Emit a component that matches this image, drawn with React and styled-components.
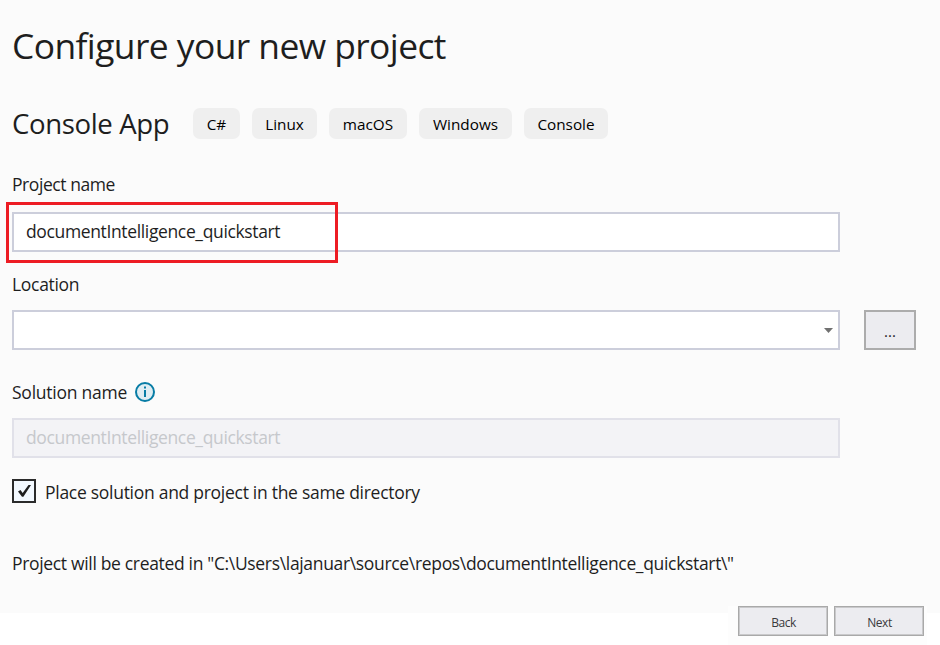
import React from "react";
import styled, { createGlobalStyle } from "styled-components";

const Global = createGlobalStyle`
  *, *::before, *::after { box-sizing: border-box; }
  body {
    margin: 0;
    background: #ffffff;
    color: #1e1e1e;
    font-family: "Open Sans", "Noto Sans", sans-serif;
    font-size: 17.5px;
  }
  button, input { font: inherit; }
`;

const Page = styled.div`
  width: 940px;
  height: 645px;
  overflow: hidden;
`;

const Content = styled.main`
  height: 613px;
  padding: 22px 24px 0 12px;
  background: #fbfbfb;
`;

const Title = styled.h1`
  margin: 0;
  height: 46px;
  font-size: 35.4px;
  font-weight: 400;
  line-height: 46px;
  letter-spacing: -0.58px;
  white-space: nowrap;
`;

const Template = styled.div`
  display: flex;
  align-items: center;
  height: 31px;
  margin-top: 40px;
`;

const TemplateName = styled.h2`
  margin: 0;
  width: 181px;
  font-size: 27.6px;
  font-weight: 400;
  line-height: 31px;
  letter-spacing: -0.38px;
  white-space: nowrap;
`;

const Tags = styled.div`
  display: flex;
  gap: 12px;
`;

const Tag = styled.span`
  width: ${(p) => p.$width}px;
  height: 31px;
  border-radius: 7px;
  background: #efefef;
  color: #000;
  font-size: 15.3px;
  line-height: 32px;
  text-align: center;
`;

const Label = styled.label`
  display: flex;
  align-items: center;
  gap: 8px;
  height: 24px;
  margin-top: ${(p) => p.$top}px;
  line-height: 24px;
  letter-spacing: ${(p) => p.$spacing || 0}px;
  white-space: nowrap;
`;

const FieldRow = styled.div`
  position: relative;
  display: flex;
  gap: 24px;
  height: 40px;
  margin-top: ${(p) => p.$top}px;
`;

const TextInput = styled.input`
  width: 828px;
  height: 40px;
  padding: 0 12px 2px;
  border: 2px solid #cccedb;
  border-radius: 0;
  outline: none;
  background: #fff;
  color: #1e1e1e;
  letter-spacing: -0.36px;
  &:disabled {
    border-color: #e1e1e9;
    background: #f3f3f6;
    color: #c6c8cc;
  }
`;

const Combo = styled.div`
  display: flex;
  align-items: center;
  justify-content: flex-end;
  width: 828px;
  height: 40px;
  padding-right: 5px;
  border: 2px solid #cccedb;
  background: #fff;
`;

const BrowseButton = styled.button`
  width: 52px;
  height: 40px;
  padding: 2px 0 0;
  border: 2px solid #acacac;
  background: #ececf0;
  color: #1e1e1e;
  font-size: 15px;
  line-height: 20px;
`;

const Highlight = styled.div`
  position: absolute;
  left: -6px;
  top: -10px;
  width: 332px;
  height: 61px;
  border: 3px solid #ed1c24;
  pointer-events: none;
`;

const CheckRow = styled.div`
  display: flex;
  gap: 9px;
  height: 24px;
  margin-top: 21px;
  line-height: 27px;
  letter-spacing: -0.28px;
  white-space: nowrap;
`;

const CheckBox = styled.span`
  width: 24px;
  height: 24px;
  border: 2px solid #2b2b2b;
  background: #f3f9ff;
  svg { display: block; }
`;

const PathNote = styled.p`
  margin: 47px 0 0;
  line-height: 26px;
  letter-spacing: -0.33px;
  white-space: nowrap;
`;

const Footer = styled.footer`
  display: flex;
  gap: 6px;
  width: 199px;
  height: 39px;
  margin: -7px 0 0 728px;
  padding-left: 10px;
  background: #fdfdfd;
`;

const NavButton = styled.button`
  width: 90px;
  height: 30px;
  padding: 3px 0 0 1px;
  border: 1px solid #a9a9a9;
  box-shadow: inset 0 0 0 1px #c9c9cb;
  background: #ececf0;
  color: #3a3a3c;
  font-size: 12px;
  line-height: 20px;
  letter-spacing: -0.45px;
`;

const InfoIcon = styled.svg`
  margin: 0 0 0 -0.5px;
`;

const tags = [["C#", 47], ["Linux", 65], ["macOS", 78], ["Windows", 93], ["Console", 84]];

export default function App() {
  return (
    <Page>
      <Global />
      <Content>
        <Title>Configure your new project</Title>
        <Template>
          <TemplateName>Console App</TemplateName>
          <Tags>
            {tags.map(([name, width]) => <Tag key={name} $width={width}>{name}</Tag>)}
          </Tags>
        </Template>
        <Label $top={33} $spacing={-0.43}>Project name</Label>
        <FieldRow $top={16}>
          <TextInput defaultValue="documentIntelligence_quickstart" />
          <Highlight />
        </FieldRow>
        <Label $top={20} $spacing={-0.3}>Location</Label>
        <FieldRow $top={14}>
          <Combo>
            <svg width="9" height="5" viewBox="0 0 9 5"><path d="M0 0H9L4.5 5Z" fill="#717171" /></svg>
          </Combo>
          <BrowseButton>...</BrowseButton>
        </FieldRow>
        <Label $top={30} $spacing={-0.24}>
          Solution name
          <InfoIcon width="20" height="20" viewBox="0 0 20 20">
            <circle cx="10" cy="10" r="9" fill="#dfedf3" stroke="#077ca5" strokeWidth="2" />
            <rect x="9" y="8" width="2" height="7" fill="#077ca5" />
            <rect x="9" y="4.5" width="2" height="2" fill="#077ca5" />
          </InfoIcon>
        </Label>
        <FieldRow $top={14}>
          <TextInput disabled defaultValue="documentIntelligence_quickstart" />
        </FieldRow>
        <CheckRow>
          <CheckBox>
            <svg width="20" height="20" viewBox="0 0 20 20">
              <path d="M4 10.6L6.5 9.1L8.7 12L14.5 4H17L9.4 15.8H8Z" fill="#1e1e1e" />
            </svg>
          </CheckBox>
          Place solution and project in the same directory
        </CheckRow>
        <PathNote>{'Project will be created in "C:\\Users\\lajanuar\\source\\repos\\documentIntelligence_quickstart\\"'}</PathNote>
      </Content>
      <Footer>
        <NavButton>Back</NavButton>
        <NavButton>Next</NavButton>
      </Footer>
    </Page>
  );
}
